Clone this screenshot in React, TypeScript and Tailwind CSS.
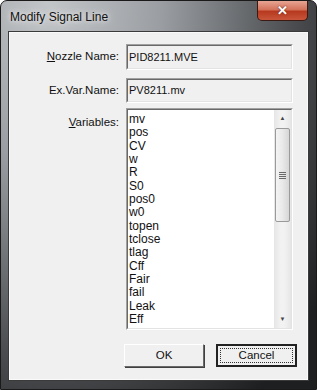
import React from "react";

const variables = [
  "mv", "pos", "CV", "w", "R", "S0", "pos0", "w0", "topen",
  "tclose", "tlag", "Cff", "Fair", "fail", "Leak", "Eff",
];

const sunken =
  "border-t-[#a0a0a0] border-l-[#a0a0a0] border-b-white border-r-white border";

function Field({ value }: { value: string }) {
  return (
    <div className={`${sunken} h-full`}>
      <div className="h-full border border-t-[#696969] border-l-[#696969] border-b-[#e3e3e3] border-r-[#e3e3e3] bg-[#f0f0f0] flex items-center pl-[1px] text-[11px] text-[#111]">
        {value}
      </div>
    </div>
  );
}

function ScrollBar() {
  return (
    <div className="w-[17px] h-full flex flex-col bg-[linear-gradient(to_right,#e6e6e6,#f2f2f2_40%,#f2f2f2_60%,#e6e6e6)]">
      <div className="h-[17px] flex items-center justify-center text-[6px] text-[#444]">▲</div>
      <div className="mt-[1px] mx-[1px] h-[94px] rounded-[2px] border border-[#9a9a9a] bg-[linear-gradient(to_right,#f4f4f4,#e9e9e9_50%,#d6d6d6)] flex flex-col items-center justify-center gap-[1px]">
        <div className="w-[7px] h-[1px] bg-[#6a6a6a]" />
        <div className="w-[7px] h-[1px] bg-[#6a6a6a]" />
        <div className="w-[7px] h-[1px] bg-[#6a6a6a]" />
        <div className="w-[7px] h-[1px] bg-[#6a6a6a]" />
      </div>
      <div className="flex-1" />
      <div className="h-[17px] flex items-center justify-center text-[6px] text-[#444]">▼</div>
    </div>
  );
}

export default function App() {
  return (
    <div
      className="w-[317px] h-[390px] flex flex-col rounded-t-[7px] border border-[#1a1a1a] overflow-hidden bg-[radial-gradient(ellipse_at_15%_0%,#c3c6c9_0%,#9a9ea2_30%,#4a4c4f_65%,#1e1f20_90%)]"
      style={{ fontFamily: '"Liberation Sans", Arial, sans-serif' }}
    >
      {/* title bar */}
      <div className="h-[30px] flex items-start shrink-0">
        <span className="ml-[9px] mt-[7px] text-[12px] text-[#111] [text-shadow:0_0_8px_#e8e8e8,0_0_4px_#e8e8e8]">
          Modify Signal Line
        </span>
        <button className="ml-auto mr-[8px] w-[51px] h-[20px] rounded-b-[5px] border border-t-0 border-[#3b1a14] bg-[linear-gradient(to_bottom,#e7a593,#d4735c_45%,#b73a1f_55%,#c8553a)] flex items-center justify-center text-white text-[13px] font-bold [text-shadow:0_0_2px_#5a1a10]">
          ✕
        </button>
      </div>

      {/* client area */}
      <div className="mx-[7px] mb-[8px] flex-1 bg-[#f0f0f0] border border-[#3a3a3a] shadow-[inset_0_0_0_1px_#fafafa] text-[11.5px] text-[#111]">
        <div className="grid grid-cols-[110px_167px] gap-x-[7px] pt-[12px]">
          <div className="h-[26px] flex items-center justify-end">
            <span><span className="underline">N</span>ozzle Name:</span>
          </div>
          <div className="h-[26px]">
            <Field value="PID8211.MVE" />
          </div>

          <div className="h-[25px] mt-[8px] flex items-center justify-end">Ex.Var.Name:</div>
          <div className="h-[25px] mt-[8px]">
            <Field value="PV8211.mv" />
          </div>

          <div className="mt-[5px] pt-[6px] text-right">
            <span className="underline">V</span>ariables:
          </div>
          <div className={`${sunken} mt-[5px] h-[222px]`}>
            <div className="h-full border border-t-[#696969] border-l-[#696969] border-b-[#e3e3e3] border-r-[#e3e3e3] bg-white flex overflow-hidden">
              <div className="flex-1 pl-[1px] pt-[3px] text-[12px] leading-[13.35px] overflow-hidden">
                {variables.map((v) => (
                  <div key={v}>{v}</div>
                ))}
              </div>
              <ScrollBar />
            </div>
          </div>
        </div>

        <div className="flex mt-[14px] ml-[115px] gap-[12px] text-[11.5px]">
          <button className="w-[80px] h-[23px] bg-[#f0f0f0] border border-t-white border-l-white border-b-[#696969] border-r-[#696969] shadow-[1px_1px_0_#404040]">
            OK
          </button>
          <button className="w-[81px] h-[23px] bg-[#f0f0f0] border-2 border-[#222] p-[2px]">
            <div className="h-full border border-dotted border-[#333] flex items-center justify-center">
              Cancel
            </div>
          </button>
        </div>
      </div>
    </div>
  );
}
